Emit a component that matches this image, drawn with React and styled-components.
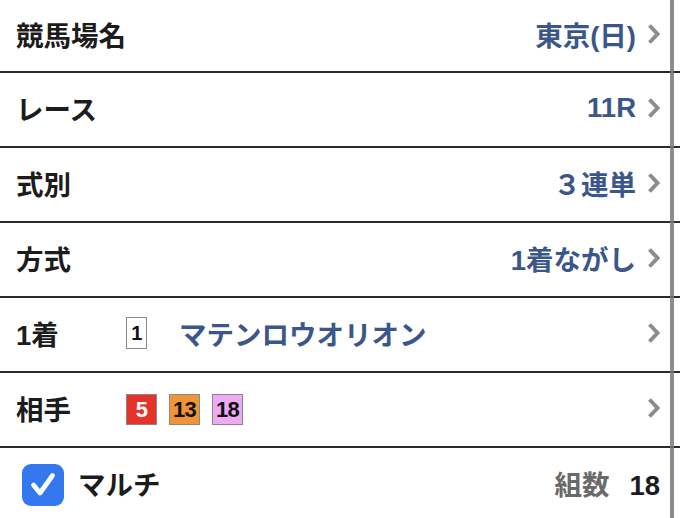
import styled, { createGlobalStyle } from 'styled-components';

const GlobalStyle = createGlobalStyle`
  html, body {
    margin: 0;
    padding: 0;
    background: #fff;
  }
  body {
    font-family: "Liberation Sans", "Noto Sans CJK JP", sans-serif;
    -webkit-font-smoothing: antialiased;
  }
`;

const Page = styled.div`
  position: relative;
  width: 680px;
  height: 518px;
  overflow: hidden;
  background: #fff;

  &::after {
    content: '';
    position: absolute;
    top: 0;
    bottom: 0;
    right: 6px;
    width: 4px;
    background: rgba(120, 120, 120, 0.85);
  }
`;

const Row = styled.div`
  display: flex;
  align-items: center;
  height: ${(p) => (p.$first ? 68 : 70)}px;
  padding: 0 20px 3px 16px;
  border-bottom: ${(p) => (p.$last ? 'none' : '2px solid #2b2b2b')};
  box-sizing: content-box;
`;

const Label = styled.span`
  font-size: 27.5px;
  font-weight: 700;
  color: #1c1c1c;
  width: ${(p) => (p.$narrow ? '110px' : 'auto')};
  flex-shrink: 0;
`;

const Value = styled.span`
  margin-left: auto;
  font-size: 27.5px;
  font-weight: 700;
  color: #3b568a;
`;

const Chevron = styled.svg`
  width: 13px;
  height: 22px;
  margin-left: 11px;
  flex-shrink: 0;
`;

const Horse = styled.span`
  font-size: 27.5px;
  font-weight: 700;
  color: #3b568a;
  margin-left: 32px;
`;

const Badges = styled.div`
  display: flex;
  gap: 12px;
  margin-top: 3px;
`;

const Badge = styled.span`
  display: inline-flex;
  align-items: center;
  justify-content: center;
  width: ${(p) => (p.$small ? '19px' : '29px')};
  height: ${(p) => (p.$small ? '30px' : '29px')};
  border: 1.5px solid #888;
  background: ${(p) => p.$bg};
  color: ${(p) => p.$fg};
  font-size: ${(p) => (p.$small ? '20px' : '22px')};
  font-weight: 700;
  letter-spacing: -0.8px;
`;

const Spacer = styled.span`
  margin-left: auto;
`;

const Check = styled.span`
  display: inline-flex;
  align-items: center;
  justify-content: center;
  width: 42px;
  height: 42px;
  border-radius: 9px;
  background: #3478f0;
  margin-left: 6px;
  margin-right: 14px;
  margin-top: 3px;
`;

const Count = styled.span`
  margin-left: auto;
  display: flex;
  align-items: baseline;
  gap: 20px;
  font-weight: 700;
  font-size: 27.5px;
`;

const CountLabel = styled.span`
  color: #6a6a6a;
`;

const CountValue = styled.span`
  color: #1c1c1c;
`;

function Arrow() {
  return (
    <Chevron viewBox="0 0 13 22">
      <polyline
        points="2.5,2.5 10.5,11 2.5,19.5"
        fill="none"
        stroke="#8c8c8c"
        strokeWidth="4"
        strokeLinecap="butt"
        strokeLinejoin="miter"
      />
    </Chevron>
  );
}

const simpleRows = [
  { label: '競馬場名', value: '東京(日)' },
  { label: 'レース', value: '11R' },
  { label: '式別', value: '３連単' },
  { label: '方式', value: '1着ながし' },
];

export default function App() {
  return (
    <>
      <GlobalStyle />
      <Page>
        {simpleRows.map((r, i) => (
          <Row key={r.label} $first={i === 0}>
            <Label>{r.label}</Label>
            <Value>{r.value}</Value>
            <Arrow />
          </Row>
        ))}
        <Row>
          <Label $narrow>1着</Label>
          <Badge $small $bg="#fff" $fg="#111">1</Badge>
          <Horse>マテンロウオリオン</Horse>
          <Spacer />
          <Arrow />
        </Row>
        <Row>
          <Label $narrow>相手</Label>
          <Badges>
            <Badge $bg="#e6332a" $fg="#fff">5</Badge>
            <Badge $bg="#f09435" $fg="#111">13</Badge>
            <Badge $bg="#eeaaf2" $fg="#111">18</Badge>
          </Badges>
          <Spacer />
          <Arrow />
        </Row>
        <Row $last>
          <Check>
            <svg width="28" height="28" viewBox="0 0 28 28">
              <polyline
                points="4.5,14 11,22 23.5,4.5"
                fill="none"
                stroke="#fff"
                strokeWidth="4.8"
                strokeLinecap="round"
                strokeLinejoin="round"
              />
            </svg>
          </Check>
          <Label>マルチ</Label>
          <Count>
            <CountLabel>組数</CountLabel>
            <CountValue>18</CountValue>
          </Count>
        </Row>
      </Page>
    </>
  );
}
